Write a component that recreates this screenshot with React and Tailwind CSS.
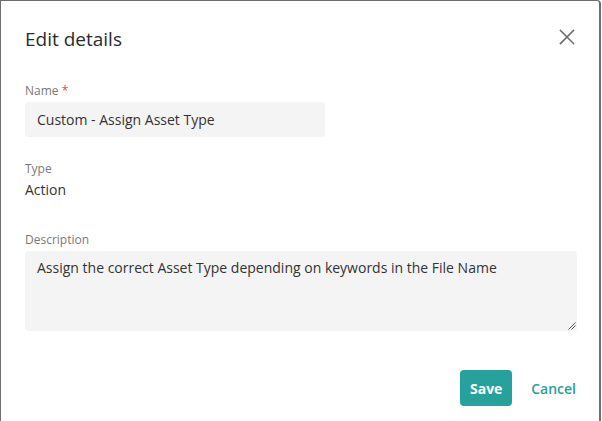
import React from "react";

export default function App() {
  return (
    <div className="w-[602px] h-[421px] bg-white overflow-hidden" style={{ fontFamily: '"Open Sans", "Noto Sans", sans-serif' }}>
      <div className="w-[601px] h-[423px] bg-white border-l border-t border-r-2 border-[#6e6e6e] rounded-tr-[4px] flex flex-col">
        <div className="flex items-start justify-between pl-[24px] pr-[24px] pt-[26px]">
          <h1 className="text-[19px] leading-[24px] text-[#2b2b2b]">Edit details</h1>
          <button className="mt-[2px] text-[#6f6f6f]">
            <svg width="16" height="16" viewBox="0 0 16 16" fill="none" stroke="currentColor" strokeWidth="1.6" strokeLinecap="square">
              <path d="M1.5 1.5 L14.5 14.5 M14.5 1.5 L1.5 14.5" />
            </svg>
          </button>
        </div>

        <div className="pl-[24px] pr-[24px] pt-[33px] flex flex-col">
          <label className="text-[12px] leading-[14px] text-[#7a7a7a]">
            Name <span className="text-[#e5484d]">*</span>
          </label>
          <div className="mt-[4px] w-[300px] h-[35px] rounded-[4px] bg-[#f4f4f4] flex items-center px-[12px] text-[14px] text-[#333]">
            Custom - Assign Asset Type
          </div>

          <label className="mt-[25px] text-[12px] leading-[14px] text-[#7a7a7a]">Type</label>
          <div className="mt-[5px] text-[14px] leading-[18px] text-[#333]">Action</div>

          <label className="mt-[34px] text-[12px] leading-[14px] text-[#7a7a7a]">Description</label>
          <div className="relative mt-[4px] w-[552px] h-[80px] rounded-[4px] bg-[#f4f4f4] px-[12px] pt-[8px] text-[14px] leading-[18px] text-[#333]">
            Assign the correct Asset Type depending on keywords in the File Name
            <svg className="absolute right-[1px] bottom-[1px]" width="9" height="9" viewBox="0 0 9 9" stroke="#555" strokeWidth="1">
              <path d="M8.5 1.5 L1.5 8.5 M8.5 4.5 L4.5 8.5" />
            </svg>
          </div>
        </div>

        <div className="flex items-center justify-end pr-[23px] pt-[39px] gap-[19px]">
          <button className="h-[36px] w-[52px] rounded-[4px] bg-[#26a19b] text-white text-[14px] font-bold">Save</button>
          <button className="text-[14px] font-semibold text-[#26a19b]">Cancel</button>
        </div>
      </div>
    </div>
  );
}
